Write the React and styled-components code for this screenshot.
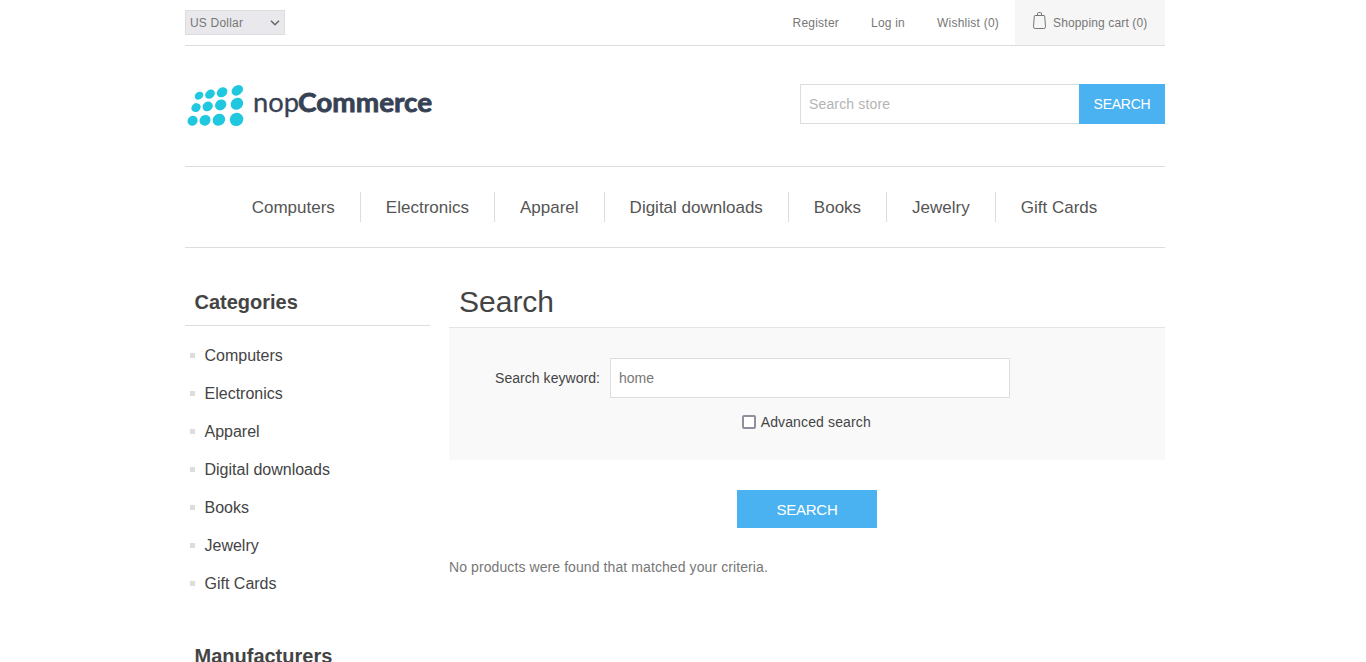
import React from "react";
import styled, { createGlobalStyle } from "styled-components";

const GlobalStyle = createGlobalStyle`
  * { box-sizing: border-box; }
  html, body { margin: 0; padding: 0; background: #fff; }
  body {
    font-family: "Liberation Sans", Arial, sans-serif;
    font-size: 14px;
    color: #777;
  }
  input, button, select { font-family: inherit; }
  ul { list-style: none; margin: 0; padding: 0; }
  a { color: inherit; text-decoration: none; }
`;

const line = "#ddd";

const Page = styled.div`
  width: 980px;
  height: 100vh;
  margin-left: 185px;
  overflow: hidden;
`;

const TopBar = styled.div`
  display: flex;
  justify-content: space-between;
  height: 46px;
  border-bottom: 1px solid ${line};
  font-size: 12px;
`;

const Currency = styled.button`
  display: flex;
  align-items: center;
  justify-content: space-between;
  width: 100px;
  height: 25px;
  margin-top: 10px;
  padding: 0 4px;
  border: 1px solid ${line};
  border-radius: 0;
  background: #e9e9ed;
  color: #777;
  font-size: 12px;
  letter-spacing: 0.2px;
`;

const TopLinks = styled.nav`
  display: flex;
`;

const TopLink = styled.a`
  padding: 0 16px;
  letter-spacing: 0.22px;
  line-height: 46px;
`;

const CartLink = styled.a`
  display: flex;
  align-items: center;
  gap: 6px;
  width: 150px;
  height: 45px;
  padding-left: 17px;
  background: #f6f6f6;
  letter-spacing: 0.14px;
  line-height: 46px;
  white-space: nowrap;

  svg { margin-top: -4px; }
`;

const Header = styled.header`
  display: flex;
  justify-content: space-between;
  height: 120px;
`;

const LogoLink = styled.a`
  margin-top: 32px;

  svg { display: block; overflow: visible; }
`;

const StoreSearch = styled.form`
  display: flex;
  height: 40px;
  margin-top: 38px;
`;

const Field = styled.input`
  width: ${(p) => p.$width}px;
  height: 40px;
  padding: 0 8px;
  border: 1px solid ${line};
  border-right-width: ${(p) => (p.$joined ? 0 : 1)}px;
  border-radius: 0;
  outline: none;
  background: #fff;
  color: #777;
  font-size: 14px;

  &::placeholder { color: #b4b4b4; opacity: 1; letter-spacing: 0.15px; }
`;

const BlueButton = styled.button`
  width: ${(p) => p.$width}px;
  height: ${(p) => p.$height}px;
  padding: 0;
  border: 0;
  background: #4ab2f1;
  color: #fff;
  font-size: ${(p) => p.$size}px;
  letter-spacing: -0.25px;
  text-transform: uppercase;
`;

const MainMenu = styled.ul`
  display: flex;
  justify-content: center;
  align-items: center;
  height: 82px;
  padding-right: 1px;
  border-top: 1px solid ${line};
  border-bottom: 1px solid ${line};
  color: #555;
  font-size: 17px;
`;

const MenuItem = styled.li`
  height: 30px;
  padding: 0 25px;
  line-height: 32px;

  & + & { border-left: 1px solid ${line}; }
`;

const Columns = styled.div`
  display: flex;
  gap: 19px;
  padding-top: 30px;
`;

const Sidebar = styled.aside`
  width: 245px;
  color: #444;
`;

const Block = styled.section`
  margin-bottom: 18px;
`;

const BlockTitle = styled.h2`
  height: 48px;
  margin: 0;
  padding-left: 9.5px;
  border-bottom: 1px solid ${line};
  font-size: 20px;
  line-height: 48px;
`;

const CategoryList = styled.ul`
  padding: 11px 0 11px 5px;
`;

const Category = styled.li`
  display: flex;
  align-items: center;
  gap: 9.5px;
  height: 38px;
  font-size: 16px;

  &::before {
    content: "";
    width: 5px;
    height: 5px;
    margin-bottom: 2px;
    background: ${line};
  }
`;

const Main = styled.main`
  width: 716px;
`;

const Title = styled.h1`
  height: 50px;
  margin: 0;
  padding-left: 10px;
  border-bottom: 1px solid #e4e4e4;
  color: #444;
  font-size: 30px;
  font-weight: 400;
  line-height: 48px;
`;

const SearchPanel = styled.div`
  height: 132px;
  padding-top: 30px;
  background: #f9f9f9;
  color: #444;
`;

const KeywordRow = styled.label`
  display: flex;
  align-items: center;
  gap: 10px;
  padding-left: 46px;
`;

const KeywordLabel = styled.span`
  width: 105px;
  letter-spacing: 0.05px;
  text-align: right;
  white-space: nowrap;
`;

const AdvancedRow = styled.label`
  display: flex;
  justify-content: center;
  align-items: center;
  gap: 4.5px;
  height: 16px;
  margin-top: 16px;
  padding-right: 1px;
  letter-spacing: 0.13px;
`;

const Checkbox = styled.input`
  appearance: none;
  width: 14px;
  height: 14px;
  margin: 0;
  border: 2px solid #8f8f9d;
  border-radius: 2px;
  background: #fff;
`;

const ButtonRow = styled.div`
  display: flex;
  justify-content: center;
  padding: 30px 0;
`;

const Result = styled.p`
  margin: 0;
  letter-spacing: 0.09px;
  line-height: 18px;
`;

const dots = [
  [19, 17.7, 4.6, 3.7], [30, 16.2, 5.2, 4.2], [42.1, 14.3, 5.7, 4.6], [57.3, 12.3, 6.2, 4.8],
  [16, 29.6, 4.9, 4.2], [27.7, 28.4, 5.3, 4.7], [40.7, 26.9, 5.9, 5.2], [56.9, 25.8, 6.5, 5.7],
  [12.6, 42.8, 5.2, 4.8], [25, 42.3, 5.7, 5.2], [38.9, 41.8, 6.4, 5.8], [56.5, 41.4, 6.9, 6.6],
];

const Logo = () => (
  <svg width="255" height="56" viewBox="0 0 255 56" role="img" aria-label="nopCommerce">
    <g transform="translate(-5 0)" fill="#1fc8de">
      {dots.map(([x, y, rx, ry]) => (
        <ellipse key={`${x}-${y}`} cx={x} cy={y} rx={rx} ry={ry} transform={`rotate(-38 ${x} ${y})`} />
      ))}
    </g>
    <g fill="#374154" stroke="#374154" fontFamily="Lato, sans-serif" fontSize="27.5">
      <text x="68" y="34.3" strokeWidth="0.3" textLength="46" lengthAdjust="spacingAndGlyphs">nop</text>
      <text x="113" y="34.3" fontWeight="700" strokeWidth="0.8" textLength="134.3" lengthAdjust="spacingAndGlyphs">Commerce</text>
    </g>
  </svg>
);

const BagIcon = () => (
  <svg width="15" height="17" viewBox="0 0 15 17" fill="none" stroke="#777">
    <path d="M3 3.5h9q.6 0 .7.7l.8 10.5q0 1.8-1.6 1.8H3.1q-1.6 0-1.6-1.8l.8-10.5q.1-.7.7-.7z" />
    <path d="M5.5 3.5V2q0-1.5 1.2-1.5h1.6Q9.5.5 9.5 2v1.5" />
  </svg>
);

const Chevron = () => (
  <svg width="10" height="6" viewBox="0 0 10 6" fill="none" stroke="#666" strokeWidth="1.5">
    <path d="M1 .8l4 4 4-4" />
  </svg>
);

const categories = ["Computers", "Electronics", "Apparel", "Digital downloads", "Books", "Jewelry", "Gift Cards"];

export default function App() {
  return (
    <>
      <GlobalStyle />
      <Page>
        <TopBar>
          <Currency>US Dollar<Chevron /></Currency>
          <TopLinks>
            <TopLink href="#">Register</TopLink>
            <TopLink href="#">Log in</TopLink>
            <TopLink href="#">Wishlist (0)</TopLink>
            <CartLink href="#"><BagIcon />Shopping cart (0)</CartLink>
          </TopLinks>
        </TopBar>
        <Header>
          <LogoLink href="#"><Logo /></LogoLink>
          <StoreSearch>
            <Field $width={279} $joined placeholder="Search store" />
            <BlueButton type="button" $width={86} $height={40} $size={14}>Search</BlueButton>
          </StoreSearch>
        </Header>
        <MainMenu>
          {categories.map((name) => <MenuItem key={name}><a href="#">{name}</a></MenuItem>)}
        </MainMenu>
        <Columns>
          <Sidebar>
            <Block>
              <BlockTitle>Categories</BlockTitle>
              <CategoryList>
                {categories.map((name) => <Category key={name}><a href="#">{name}</a></Category>)}
              </CategoryList>
            </Block>
            <Block>
              <BlockTitle>Manufacturers</BlockTitle>
            </Block>
          </Sidebar>
          <Main>
            <Title>Search</Title>
            <SearchPanel>
              <KeywordRow>
                <KeywordLabel>Search keyword:</KeywordLabel>
                <Field $width={400} defaultValue="home" />
              </KeywordRow>
              <AdvancedRow><Checkbox type="checkbox" />Advanced search</AdvancedRow>
            </SearchPanel>
            <ButtonRow>
              <BlueButton type="button" $width={140} $height={38} $size={15}>Search</BlueButton>
            </ButtonRow>
            <Result>No products were found that matched your criteria.</Result>
          </Main>
        </Columns>
      </Page>
    </>
  );
}
